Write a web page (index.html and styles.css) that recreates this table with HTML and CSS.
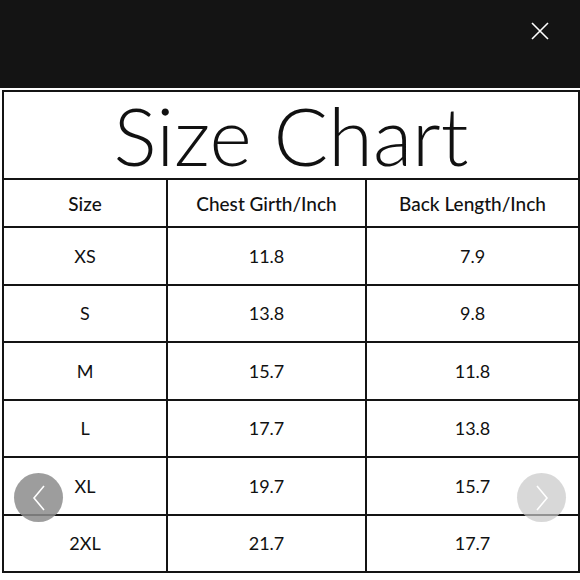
FILE: index.html
```html
<!DOCTYPE html>
<html>
<head>
<meta charset="utf-8">
<link rel="stylesheet" href="styles.css">
</head>
<body>
<div class="topbar">
  <button class="close" aria-label="Close">
    <svg width="20" height="20" viewBox="0 0 20 20"><path d="M2 2 L18 18 M18 2 L2 18" stroke="#fff" stroke-width="1.6" fill="none"/></svg>
  </button>
</div>
<div class="stage">
  <table class="chart">
    <colgroup><col class="c1"><col class="c2"><col class="c3"></colgroup>
    <tr class="title-row"><th colspan="3" class="title">Size Chart</th></tr>
    <tr class="head-row"><th>Size</th><th>Chest Girth/Inch</th><th>Back Length/Inch</th></tr>
    <tr><td>XS</td><td>11.8</td><td>7.9</td></tr>
    <tr><td>S</td><td>13.8</td><td>9.8</td></tr>
    <tr><td>M</td><td>15.7</td><td>11.8</td></tr>
    <tr><td>L</td><td>17.7</td><td>13.8</td></tr>
    <tr><td>XL</td><td>19.7</td><td>15.7</td></tr>
    <tr><td>2XL</td><td>21.7</td><td>17.7</td></tr>
  </table>
  <button class="nav prev" aria-label="Previous">
    <svg width="14" height="26" viewBox="0 0 14 26"><path d="M12 1 L2 13 L12 25" stroke="#fff" stroke-width="1.6" fill="none"/></svg>
  </button>
  <button class="nav next" aria-label="Next">
    <svg width="14" height="26" viewBox="0 0 14 26"><path d="M2 1 L12 13 L2 25" stroke="#fff" stroke-width="1.6" fill="none"/></svg>
  </button>
</div>
</body>
</html>
```
FILE: styles.css
```css
html, body { margin: 0; padding: 0; background: #fff; }
body { width: 580px; height: 580px; overflow: hidden; font-family: "Lato", "Open Sans", sans-serif; color: #111; }
.topbar { height: 88px; background: #141414; position: relative; }
.close { position: absolute; left: 530px; top: 21px; width: 20px; height: 20px; padding: 0; border: 0; background: none; }
.close svg { display: block; }
.stage { position: relative; padding: 2px 2px 0 2px; }
.chart { width: 576px; border-collapse: collapse; border: 2px solid #141414; table-layout: fixed; }
.c1 { width: 164px; }
.c2 { width: 199px; }
.c3 { width: 213px; }
.chart th, .chart td { border: 2px solid #141414; text-align: center; padding: 0; }
.title { height: 86px; font-weight: 300; font-size: 81px; line-height: 86px; }
.head-row th { height: 46px; font-weight: 500; font-size: 19px; }
.chart td { height: 55.5px; font-size: 18px; font-weight: 400; }
.nav { position: absolute; top: 385px; width: 49px; height: 49px; border-radius: 50%; border: 0; padding: 0; display: flex; align-items: center; justify-content: center; }
.prev { left: 14px; background: rgba(140,140,140,0.85); }
.next { left: 517px; background: rgba(200,200,200,0.7); }
.nav svg { display: block; }
```
